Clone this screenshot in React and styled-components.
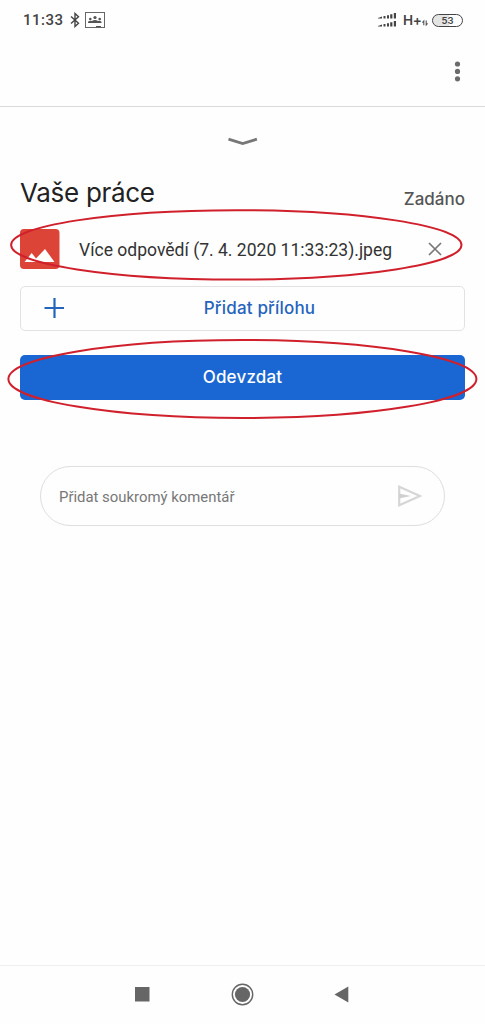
import React, { useState } from "react";
import styled, { createGlobalStyle } from "styled-components";

const GlobalStyle = createGlobalStyle`
  * {
    box-sizing: border-box;
  }

  body {
    margin: 0;
    background-color: #fefefe;
    font-family: Roboto, "Liberation Sans", sans-serif;
  }

  svg {
    display: block;
    flex-shrink: 0;
  }
`;

const Screen = styled.div`
  display: flex;
  flex-direction: column;
  width: 485px;
  height: 1024px;
  overflow: hidden;
  background-color: #fefefe;
`;

const StatusBar = styled.div`
  display: flex;
  align-items: center;
  justify-content: space-between;
  height: 40px;
  padding: 0 22px 0 23px;
  color: #444;
`;

const StatusGroup = styled.div`
  display: flex;
  align-items: center;
`;

const NoticeIcons = styled.div`
  display: flex;
  align-items: center;
  gap: 5px;
`;

const Clock = styled.span`
  width: 47px;
  font-size: 15px;
  font-weight: 500;
  letter-spacing: 0.5px;
  line-height: 20px;
  white-space: nowrap;
`;

const Network = styled.span`
  margin-left: 6px;
  width: 19px;
  font-family: Inter, sans-serif;
  font-size: 13.5px;
  font-weight: 600;
  line-height: 20px;
  letter-spacing: -0.3px;
`;

const Battery = styled.span`
  display: flex;
  align-items: center;
  justify-content: center;
  width: 31px;
  height: 13px;
  margin-left: 4px;
  border: 1px solid #444;
  border-radius: 7px;
  background: linear-gradient(90deg, #e4e4e4 55%, #fefefe 55%);
  font-family: Inter, sans-serif;
  font-size: 9.5px;
  font-weight: 600;
`;

const Toolbar = styled.div`
  display: flex;
  align-items: center;
  justify-content: flex-end;
  height: 67px;
  padding: 0 22px 2px 0;
  border-bottom: 1px solid #dadada;
`;

const IconButton = styled.button`
  display: flex;
  padding: 0;
  border: 0;
  background: none;
  cursor: pointer;
`;

const Sheet = styled.main`
  flex: 1;
  display: flex;
  flex-direction: column;
  padding: 30px 20px 0;
`;

const Handle = styled(IconButton)`
  align-self: center;
`;

const TitleRow = styled.div`
  display: flex;
  align-items: flex-end;
  justify-content: space-between;
  height: 63px;
`;

const Title = styled.h1`
  margin: 0;
  padding-bottom: 1px;
  font-family: Inter, sans-serif;
  font-size: 26px;
  font-weight: 400;
  letter-spacing: -0.3px;
  line-height: 32px;
  color: #222;
`;

const Status = styled.span`
  font-family: Inter, sans-serif;
  font-size: 17px;
  font-weight: 500;
  line-height: 22px;
  color: #555;
`;

const Marked = styled.div`
  position: relative;
  margin-top: ${(props) => props.$gap}px;
`;

/* red pen ring drawn over the row it belongs to */
const Ring = styled.svg`
  position: absolute;
  top: ${(props) => props.$top}px;
  left: ${(props) => props.$left}px;
  pointer-events: none;
  overflow: visible;
`;

const Attachment = styled.div`
  display: flex;
  align-items: center;
  height: 40px;
`;

const FileName = styled.span`
  flex: 1;
  margin: 1px 0 0 19px;
  font-size: 17.55px;
  line-height: 22px;
  color: #333;
  white-space: nowrap;
`;

const CloseButton = styled(IconButton)`
  margin-right: 23px;
`;

const ActionButton = styled.button`
  display: flex;
  align-items: center;
  width: 100%;
  height: 45px;
  margin-top: ${(props) => props.$gap || 0}px;
  padding: 0 22px 1px;
  border: ${(props) => (props.$primary ? "0" : "1px solid #e2e2e2")};
  border-radius: 5px;
  background-color: ${(props) => (props.$primary ? "#1a66d2" : "#fefefe")};
  color: ${(props) => (props.$primary ? "#fff" : "#2564bd")};
  font-family: Inter, sans-serif;
  font-size: 17px;
  font-weight: 500;
  cursor: pointer;
`;

const ActionLabel = styled.span`
  flex: 1;
  padding-left: ${(props) => props.$shift || 0}px;
  letter-spacing: 0.17px;
  line-height: 22px;
  text-align: center;
`;

const CommentBox = styled.form`
  display: flex;
  align-items: center;
  height: 60px;
  margin: 66px 20px 0;
  padding: 0 22px 0 18px;
  border: 1px solid #dedede;
  border-radius: 30px;
`;

const CommentInput = styled.input`
  flex: 1;
  min-width: 0;
  padding: 2px 0 0;
  border: 0;
  outline: 0;
  background: none;
  font-family: Roboto, sans-serif;
  font-size: 14.9px;
  color: #333;

  &::placeholder {
    color: #777;
    opacity: 1;
  }
`;

const NavBar = styled.nav`
  display: grid;
  grid-template-columns: repeat(3, 100px);
  justify-content: center;
  justify-items: center;
  align-items: center;
  height: 59px;
  padding-bottom: 1px;
  border-top: 1px solid #eee;
`;

const BluetoothIcon = () => (
  <svg width="10" height="16" viewBox="0 0 10 16">
    <path d="M1 4.5 8.5 11.2 5 14.5V1.5L8.5 4.8 1 11.5" fill="none" stroke="#444" strokeWidth="1.4" />
  </svg>
);

const ClassroomIcon = () => (
  <svg width="20" height="16" viewBox="0 0 20 16">
    <rect x="0.5" y="0.5" width="19" height="15" fill="#fff" stroke="#666" />
    <g fill="#555">
      <circle cx="10" cy="5.5" r="1.6" />
      <circle cx="5.3" cy="7" r="1.3" />
      <circle cx="14.7" cy="7" r="1.3" />
      <path d="M3 11V9.8Q5 8 7 9Q10 7.2 13 9Q15 8 16.5 9.8V11zM11 14h5v1h-5z" />
    </g>
  </svg>
);

const SignalIcon = () => (
  <svg width="19" height="14" viewBox="0 0 19 14" fill="#444">
    <path d="M0 5 4 3.5V5.5H0zM5.5 3H7.5V5.5H5.5zM9 2.2H11V5.5H9zM12.2 1.2H14.4V5.5H12.2zM15.8 0H18V5.5H15.8z" />
    <path d="M0 13 4 11.5V13.5H0zM5.5 11H7.5V13.5H5.5zM9 10.2H11V13.5H9zM12.2 9.2H14.4V13.5H12.2zM15.8 8H18V13.5H15.8z" />
  </svg>
);

const TrafficIcon = () => (
  <svg width="6" height="12" viewBox="0 0 6 12">
    <path d="M1.8 11.2V7L0.4 8.6M4.2 6.6V11L5.6 9.4" fill="none" stroke="#555" strokeWidth="1.1" />
  </svg>
);

const ImageIcon = () => (
  <svg width="40" height="40" viewBox="0 0 40 40">
    <rect width="39.5" height="40" rx="4" fill="#db4437" />
    <path d="M4.5 33 11.7 24 16 29.5 25 20 34.5 33z" fill="#fff" />
  </svg>
);

const App = () => {
  const [comment, setComment] = useState("");

  return (
    <>
      <GlobalStyle />
      <Screen>
        <StatusBar>
          <StatusGroup>
            <Clock>11:33</Clock>
            <NoticeIcons>
              <BluetoothIcon />
              <ClassroomIcon />
            </NoticeIcons>
          </StatusGroup>
          <StatusGroup>
            <SignalIcon />
            <Network>H+</Network>
            <TrafficIcon />
            <Battery>53</Battery>
          </StatusGroup>
        </StatusBar>

        <Toolbar>
          <IconButton aria-label="menu">
            <svg width="11" height="22" viewBox="0 0 11 22" fill="#6b6b6b">
              <circle cx="5.5" cy="3" r="2.6" />
              <circle cx="5.5" cy="10.4" r="2.6" />
              <circle cx="5.5" cy="17.8" r="2.6" />
            </svg>
          </IconButton>
        </Toolbar>

        <Sheet>
          <Handle aria-label="collapse">
            <svg width="30" height="10" viewBox="0 0 30 10">
              <path d="M0.5 2.2 14.7 6.5 28.9 2.2" fill="none" stroke="#777" strokeWidth="2.8" />
            </svg>
          </Handle>

          <TitleRow>
            <Title>Vaše práce</Title>
            <Status>Zadáno</Status>
          </TitleRow>

          <Marked $gap={19}>
            <Attachment>
              <ImageIcon />
              <FileName>Více odpovědí (7. 4. 2020 11:33:23).jpeg</FileName>
              <CloseButton aria-label="remove">
                <svg width="14" height="14" viewBox="0 0 14 14">
                  <path d="M1 1 13 13M13 1 1 13" stroke="#777" strokeWidth="1.7" />
                </svg>
              </CloseButton>
            </Attachment>
            <Ring $top={-19} $left={-9} width="451" height="70">
              <ellipse cx="225.3" cy="34.9" rx="225.2" ry="34.7" fill="none" stroke="#d0202c" strokeWidth="2" />
            </Ring>
          </Marked>

          <ActionButton $gap={17}>
            <svg width="24" height="24" viewBox="0 0 24 24">
              <path d="M11.5 2V22M1.5 12H21" stroke="#2564bd" strokeWidth="2.2" />
            </svg>
            <ActionLabel $shift={10}>Přidat přílohu</ActionLabel>
          </ActionButton>

          <Marked $gap={24}>
            <ActionButton $primary>
              <ActionLabel>Odevzdat</ActionLabel>
            </ActionButton>
            <Ring $top={-15} $left={-12} width="469" height="78">
              <ellipse cx="234.4" cy="39" rx="234" ry="39" fill="none" stroke="#d0202c" strokeWidth="2" />
            </Ring>
          </Marked>

          <CommentBox onSubmit={(e) => e.preventDefault()}>
            <CommentInput
              placeholder="Přidat soukromý komentář"
              value={comment}
              onChange={(e) => setComment(e.target.value)}
            />
            <IconButton aria-label="send">
              <svg width="25" height="24" viewBox="0 0 25 24">
                <path d="M2.2 2.7V21.3L23 12z" fill="none" stroke="#d6d6d6" strokeWidth="2.2" />
                <path d="M2 9.5 14 12 2 14.5z" fill="#d0d0d0" />
              </svg>
            </IconButton>
          </CommentBox>
        </Sheet>

        <NavBar>
          <svg width="15" height="15">
            <rect width="14.5" height="14.5" fill="#666" />
          </svg>
          <svg width="23" height="23" viewBox="0 0 23 23">
            <circle cx="11.5" cy="11.5" r="10.2" fill="none" stroke="#666" strokeWidth="1.4" />
            <circle cx="11.5" cy="11.5" r="7.6" fill="#666" />
          </svg>
          <svg width="17" height="17" viewBox="0 0 17 17">
            <path d="M0.5 8.5 14.3 0.5V16.5z" fill="#666" />
          </svg>
        </NavBar>
      </Screen>
    </>
  );
};

export default App;
